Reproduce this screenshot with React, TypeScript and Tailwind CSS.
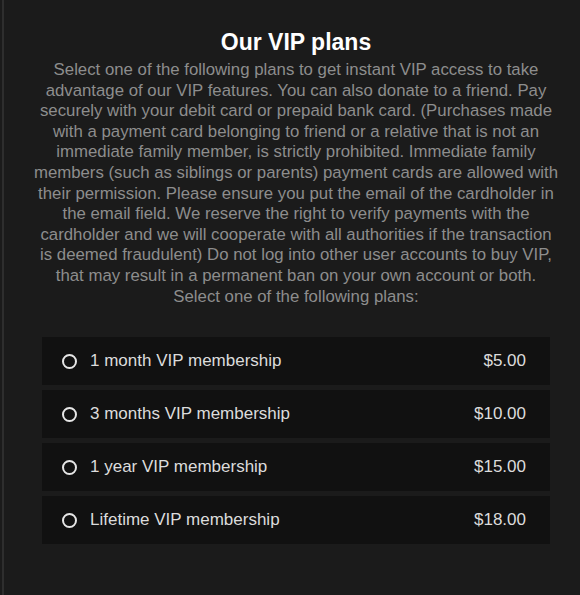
import { useState } from 'react';

type Plan = { id: string; label: string; price: string };

const PLANS: Plan[] = [
  { id: '1m', label: '1 month VIP membership', price: '$5.00' },
  { id: '3m', label: '3 months VIP membership', price: '$10.00' },
  { id: '1y', label: '1 year VIP membership', price: '$15.00' },
  { id: 'life', label: 'Lifetime VIP membership', price: '$18.00' },
];

// keep the same line breaks as the original page
const INTRO_LINES = [
  'Select one of the following plans to get instant VIP access to take',
  'advantage of our VIP features. You can also donate to a friend. Pay',
  'securely with your debit card or prepaid bank card. (Purchases made',
  'with a payment card belonging to friend or a relative that is not an',
  'immediate family member, is strictly prohibited. Immediate family',
  'members (such as siblings or parents) payment cards are allowed with',
  'their permission. Please ensure you put the email of the cardholder in',
  'the email field. We reserve the right to verify payments with the',
  'cardholder and we will cooperate with all authorities if the transaction',
  'is deemed fraudulent) Do not log into other user accounts to buy VIP,',
  'that may result in a permanent ban on your own account or both.',
  'Select one of the following plans:',
];

export default function App() {
  const [selected, setSelected] = useState<string | null>(null);

  return (
    <div
      className="min-h-[595px] w-full bg-[#1b1b1b] pl-[2px]"
      style={{ fontFamily: '"Liberation Sans", Arial, sans-serif' }}
    >
      <div className="min-h-[595px] border-l-2 border-[#2e2e2e] pt-[29px]">
        {/* Header */}
        <div className="ml-[22px] w-[540px] text-center">
          <h1 className="text-[23px] font-bold leading-[26px] text-white">Our VIP plans</h1>
          <p className="mt-[5px] text-[16.8px] leading-[20.6px] text-[#8d8d8d]">
            {INTRO_LINES.map((line, i) => (
              <span key={i} className="block whitespace-nowrap">
                {line}
              </span>
            ))}
          </p>
        </div>

        {/* Plans */}
        <div className="ml-[38px] mt-[30px] flex w-[508px] flex-col gap-[5px]">
          {PLANS.map((p) => (
            <label
              key={p.id}
              className="flex h-[48px] cursor-pointer items-center bg-[#111111] pl-[20px] pr-[24px] text-[17px] text-[#dcdcdc]"
            >
              <input
                type="radio"
                name="plan"
                className="sr-only"
                checked={selected === p.id}
                onChange={() => setSelected(p.id)}
              />
              <span className="flex h-[15px] w-[15px] shrink-0 items-center justify-center rounded-full border-2 border-[#e6e6e6]">
                {selected === p.id && <span className="h-[7px] w-[7px] rounded-full bg-[#e6e6e6]" />}
              </span>
              <span className="ml-[13px] flex-1">{p.label}</span>
              <span>{p.price}</span>
            </label>
          ))}
        </div>
      </div>
    </div>
  );
}
